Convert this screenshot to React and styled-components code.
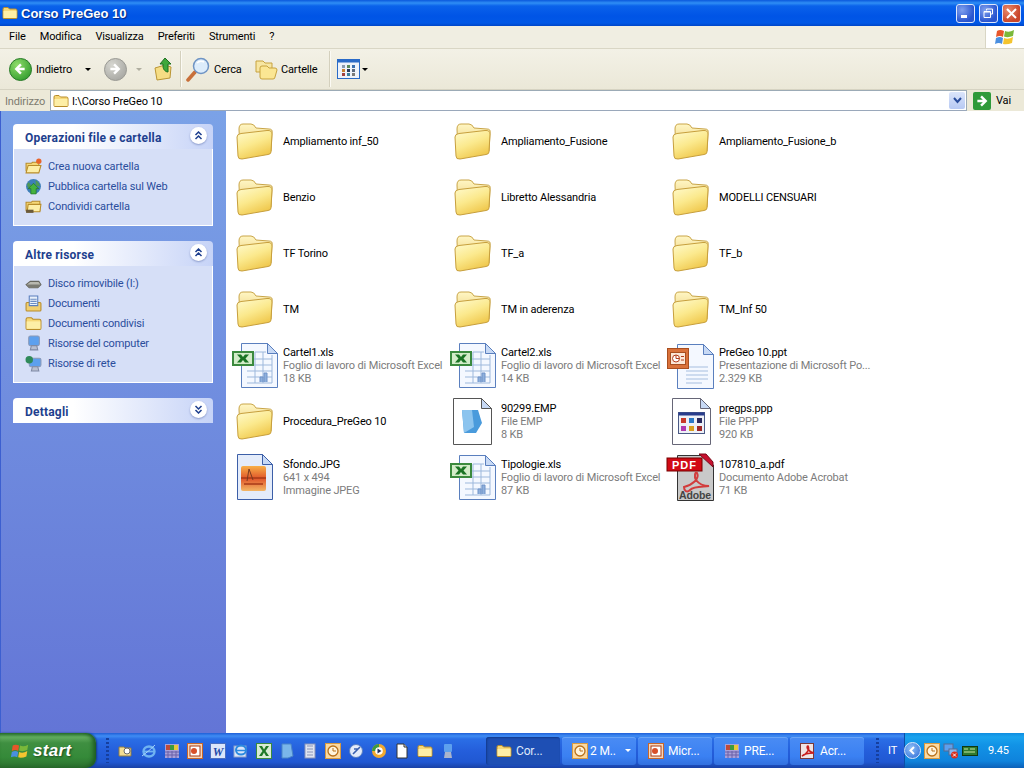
import React from "react";
import styled, { createGlobalStyle } from "styled-components";

const Global = createGlobalStyle`
  html, body { margin: 0; padding: 0; overflow: hidden; background: #fff; }
  * { box-sizing: border-box; }
`;

const font = `Roboto, "Noto Sans", sans-serif`;

const Desktop = styled.div`
  width: 1024px;
  height: 768px;
  display: flex;
  flex-direction: column;
  overflow: hidden;
  font-family: ${font};
  font-size: 11px;
  letter-spacing: -0.15px;
  color: #000;
`;
const TitleBar = styled.div`
  height: 26px;
  flex: none;
  display: flex;
  align-items: center;
  padding: 0 3px 0 2px;
  background: linear-gradient(180deg, #0a58dc 0, #2f8ef5 3px, #0a62ea 6px, #0054e6 16px, #0158e6 23px, #0046c8 26px);
`;
const TitleText = styled.div`
  margin-left: 3px;
  flex: 1;
  color: #fff;
  font-family: "Liberation Sans", sans-serif;
  font-weight: 700;
  font-size: 13px;
  letter-spacing: 0;
  text-shadow: 1px 1px 1px #0a2a80;
`;
const WinButton = styled.div`
  width: 19px;
  height: 19px;
  margin-left: 4px;
  border: 1px solid #dfe8fb;
  border-radius: 3px;
  display: flex;
  align-items: center;
  justify-content: center;
  background: ${(p) => p.$close
    ? "radial-gradient(circle at 30% 30%, #e88a6c, #c9452a 70%)"
    : "radial-gradient(circle at 30% 30%, #7fa0ee, #2a55cf 70%)"};
`;
const MenuBar = styled.div`
  height: 23px;
  flex: none;
  display: flex;
  align-items: stretch;
  background: #f0eee2;
  border-bottom: 1px solid #d9d6c5;
`;
const MenuItems = styled.div`
  flex: 1;
  display: flex;
  align-items: center;
  padding: 0 0 2px 9px;
  gap: 14px;
`;
const LogoBox = styled.div`
  width: 39px;
  background: #fff;
  border-left: 1px solid #d9d6c5;
  display: flex;
  align-items: center;
  justify-content: center;
`;
const ToolBar = styled.div`
  height: 41px;
  flex: none;
  display: flex;
  align-items: center;
  padding-left: 9px;
  background: linear-gradient(180deg, #f3f1e6, #ebe8d8);
  border-bottom: 1px solid #d6d3c2;
`;
const ToolText = styled.span`
  width: ${(p) => p.$width}px;
  margin-left: ${(p) => p.$gap ?? 3}px;
  margin-right: ${(p) => p.$after ?? 0}px;
  white-space: nowrap;
`;
const ToolSep = styled.div`
  width: 1px;
  height: 36px;
  background: #d4d0bd;
  box-shadow: 1px 0 0 #fbfaf4;
  margin: ${(p) => p.$margin};
`;
const Caret = styled.span`
  width: 0;
  height: 0;
  border-left: 3px solid transparent;
  border-right: 3px solid transparent;
  border-top: 3px solid ${(p) => p.$color || "#000"};
  margin-left: ${(p) => p.$left}px;
  margin-right: ${(p) => p.$right || 0}px;
`;
const AddressBar = styled.div`
  height: 21px;
  flex: none;
  display: flex;
  align-items: center;
  background: #ece9d8;
`;
const AddressLabel = styled.div`
  width: 50px;
  padding: 1px 0 0 5px;
  color: #7d7b6f;
`;
const AddressField = styled.div`
  width: 917px;
  height: 21px;
  flex: none;
  display: flex;
  align-items: center;
  padding-left: 2px;
  gap: 3px;
  background: #fff;
  border: 1px solid #9cabb6;
  border-bottom-color: #9aa8bb;
`;
const AddressValue = styled.div`
  flex: 1;
  padding-top: 1px;
`;
const ComboButton = styled.div`
  width: 16px;
  height: 17px;
  margin-right: 1px;
  border-radius: 2px;
  background: linear-gradient(180deg, #dbe5fb, #b7c9f3);
  display: flex;
  align-items: center;
  justify-content: center;
`;
const GoBox = styled.div`
  flex: 1;
  display: flex;
  align-items: center;
  gap: 5px;
  padding-left: 6px;
`;
const Main = styled.div`
  flex: 1;
  min-height: 0;
  display: flex;
  background: #fff;
`;
const SideBar = styled.div`
  width: 226px;
  flex: none;
  padding: 13px 13px 0 12px;
  background: linear-gradient(180deg, #7ba2e7, #6375d6);
  border-left: 1px solid #3c5fd0;
  display: flex;
  flex-direction: column;
  gap: 15px;
`;
const Panel = styled.div`
  width: 200px;
`;
const PanelHead = styled.div`
  height: 25px;
  display: flex;
  align-items: center;
  justify-content: space-between;
  padding: 2px 6px 0 12px;
  border-radius: 4px 4px 0 0;
  background: linear-gradient(90deg, #fff 30%, #c6d3f7);
  color: #1e3f8e;
  font-weight: 700;
  font-size: 12px;
  letter-spacing: 0.2px;
`;
const Chevron = styled.div`
  width: 17px;
  height: 17px;
  border-radius: 50%;
  background: #fff;
  box-shadow: 0 1px 2px #8c9ccb;
  display: flex;
  align-items: center;
  justify-content: center;
  margin-top: -5px;
`;
const PanelBody = styled.div`
  padding: 7px 0 9px 11px;
  background: #d6dff7;
  border: 1px solid #fff;
  border-top: none;
`;
const PanelLink = styled.div`
  height: 20px;
  display: flex;
  align-items: center;
  gap: 6px;
  color: #2a4d9c;
`;
const Files = styled.div`
  flex: 1;
  padding: 2px 0 0 4px;
  display: grid;
  grid-template-columns: repeat(3, 218px);
  grid-auto-rows: 56px;
`;
const Tile = styled.div`
  display: flex;
  align-items: center;
  gap: 5px;
`;
const TileIcon = styled.div`
  width: 48px;
  height: 48px;
  flex: none;
`;
const TileText = styled.div`
  line-height: 13px;
  width: 160px;
  white-space: nowrap;
`;
const TileInfo = styled.div`
  color: #7c7c7c;
`;
const TaskBar = styled.div`
  height: 35px;
  flex: none;
  display: flex;
  align-items: center;
  color: #fff;
  background: linear-gradient(180deg, #1f5fd8 0, #3f8cf3 3px, #2a6ee6 6px, #245edb 18px, #2058d2 29px, #1941a5 35px);
`;
const StartButton = styled.div`
  width: 96px;
  height: 100%;
  flex: none;
  display: flex;
  align-items: center;
  gap: 3px;
  padding-left: 10px;
  border-radius: 0 10px 10px 0;
  background: linear-gradient(180deg, #2f7c34 0, #62ad5f 4px, #3f8f41 10px, #358a39 24px, #2c6f2e 35px);
  box-shadow: inset -3px 0 4px #1e5c22, 1px 0 2px #133d80;
`;
const StartLabel = styled.span`
  font-family: "Liberation Sans", sans-serif;
  font-style: italic;
  font-weight: 700;
  font-size: 17px;
  letter-spacing: 0.3px;
  text-shadow: 1px 1px 2px #1c4a1e;
`;
const Gripper = styled.div`
  width: 3px;
  height: 25px;
  flex: none;
  margin: ${(p) => p.$margin};
  background: repeating-linear-gradient(180deg, #163f9e 0 2px, transparent 2px 4px);
`;
const QuickLaunch = styled.div`
  width: 368px;
  flex: none;
  display: flex;
  align-items: center;
  gap: 7px;
`;
const TaskButtons = styled.div`
  display: flex;
  gap: 2px;
  flex: none;
`;
const TaskButton = styled.div`
  width: 74px;
  height: 28px;
  display: flex;
  align-items: center;
  gap: ${(p) => p.$gap ?? 4}px;
  padding-left: 10px;
  border-radius: 3px;
  font-size: 12px;
  white-space: nowrap;
  color: ${(p) => p.$active ? "#dfe8fb" : "#fff"};
  background: ${(p) => p.$active
    ? "#1e4fb4"
    : "linear-gradient(180deg, #4a8cf4, #3a80f2 70%, #3270de)"};
  box-shadow: ${(p) => p.$active ? "inset 1px 1px 2px #123a8c" : "inset 0 1px 0 #6aa4f7"};
`;
const Lang = styled.div`
  width: 14px;
  flex: none;
  font-size: 11px;
  margin-left: 9px;
`;
const Tray = styled.div`
  flex: 1;
  height: 100%;
  display: flex;
  align-items: center;
  margin-left: 2px;
  gap: 3px;
  background: linear-gradient(180deg, #0f8de0 0, #1aa3ee 4px, #1293e6 12px, #0f83dc 28px, #0c60b8 35px);
  border-left: 1px solid #0c4fa8;
`;
const TrayArrow = styled.div`
  width: 17px;
  height: 17px;
  margin-left: -1px;
  border-radius: 50%;
  background: radial-gradient(circle at 40% 35%, #8fc0f7, #2a69d6);
  border: 1px solid #dbe8fb;
  display: flex;
  align-items: center;
  justify-content: center;
`;
const Clock = styled.div`
  margin-left: 7px;
`;

// folder used for all the big tiles
const FolderBig = () => (
  <svg width="48" height="48" viewBox="0 0 48 48">
    <defs>
      <linearGradient id="fbk" x1="0" y1="0" x2="0" y2="1">
        <stop offset="0" stopColor="#fff6c4" />
        <stop offset="1" stopColor="#e8c767" />
      </linearGradient>
      <linearGradient id="ffr" x1="0" y1="0" x2="0.5" y2="1">
        <stop offset="0" stopColor="#fffbd0" />
        <stop offset="0.55" stopColor="#fbe98d" />
        <stop offset="1" stopColor="#f0c94f" />
      </linearGradient>
    </defs>
    <path d="M9 12 Q9 7 13 7 L21 7 Q24 7 26 11 L39 12 Q43 12 42 16 L41 34 L10 37 Z" fill="url(#fbk)" stroke="#c9a548" />
    <path d="M7 20 Q7 17 11 16.500 L37 13.500 Q42 13 42 17 L41 35 Q41 37 38 37.500 L12 42 Q8 42.500 8 39 Z" fill="url(#ffr)" stroke="#c79f3d" />
  </svg>
);

const DocSheet = ({ x, y, w, h, stroke = "#5a7fbe", fill = "#f4f8ff", fold = 10 }) => (
  <g>
    <path d={`M${x} ${y} H${x + w - fold} L${x + w} ${y + fold} V${y + h} H${x} Z`} fill={fill} stroke={stroke} />
    <path d={`M${x + w - fold} ${y} V${y + fold} H${x + w} Z`} fill="#c7d9f5" stroke={stroke} />
  </g>
);

const ExcelBadge = () => (
  <g>
    <rect x="3" y="11" width="20" height="13" fill="#d3ecc9" stroke="#3b8a3e" strokeWidth="2" />
    <path d="M7 13.500 H11 L13 16 L15 13.500 H19 L15.500 17.500 L19 21.500 H15 L13 19 L11 21.500 H7 L10.500 17.500 Z" fill="#1a7424" />
  </g>
);

const ExcelIcon = () => (
  <svg width="48" height="48" viewBox="0 0 48 48">
    <DocSheet x={11.5} y={2.5} w={36} h={44} />
    <g stroke="#9db8dc" fill="none">
      <path d="M17 18 H42 M17 24 H42 M17 30 H42 M17 36 H42 M17 42 H42 M25 11 V42 M33 11 V42 M42 14 V42 M25 11 H36" />
    </g>
    <path d="M30 41 V36 H33 V41 M34 41 V32 H37 V41" fill="#8fb0dc" stroke="#6e92c8" />
    <ExcelBadge />
  </svg>
);

const PptIcon = () => (
  <svg width="48" height="48" viewBox="0 0 48 48">
    <DocSheet x={11.5} y={3.5} w={36} h={44} />
    <path d="M20 26 H42 M20 30 H42 M20 34 H42 M20 38 H42 M20 42 H36" stroke="#a6bedf" />
    <rect x="1.500" y="7.500" width="21" height="20" fill="#d9713a" stroke="#a84e1f" />
    <rect x="4.500" y="11.500" width="15" height="12" fill="#fbe6d6" stroke="#a84e1f" />
    <circle cx="10" cy="17.500" r="3.500" fill="#fff" stroke="#b33c1a" />
    <path d="M10 14 V17.500 H13.500" stroke="#b33c1a" fill="none" />
    <path d="M15 15.500 H18 M15 19 H18" stroke="#b33c1a" />
  </svg>
);

const EmpIcon = () => (
  <svg width="48" height="48" viewBox="0 0 48 48">
    <DocSheet x={5.5} y={1.5} w={38} h={46} stroke="#555" fill="#fff" />
    <path d="M14 13 H30 L34 26 L28 36 H16 Z" fill="#4a9bdc" />
    <path d="M14 13 H24 L26 30 L16 36 Z" fill="#8cc4ee" />
  </svg>
);

const PppIcon = () => (
  <svg width="48" height="48" viewBox="0 0 48 48">
    <DocSheet x={6.5} y={1.5} w={38} h={46} stroke="#667" fill="#fff" />
    <rect x="12.500" y="15.500" width="26" height="21" fill="#eef1f7" stroke="#4b5a86" />
    <rect x="12.500" y="15.500" width="26" height="3" fill="#283c8c" />
    {[
      [15, 21, "#c83a2a"], [23, 21, "#2a7ac8"], [31, 21, "#2a2a60"],
      [15, 29, "#b03ab0"], [23, 29, "#d8a020"], [31, 29, "#a02828"],
    ].map(([x, y, c]) => (
      <rect key={`${x}-${y}`} x={x} y={y} width="5" height="5" fill={c} />
    ))}
  </svg>
);

const JpgIcon = () => (
  <svg width="48" height="48" viewBox="0 0 48 48">
    <defs>
      <linearGradient id="sun" x1="0" y1="0" x2="0" y2="1">
        <stop offset="0" stopColor="#f8b048" />
        <stop offset="0.5" stopColor="#e0552a" />
        <stop offset="1" stopColor="#f3b765" />
      </linearGradient>
    </defs>
    <DocSheet x={7.5} y={1.5} w={35} h={45} stroke="#3c5fa8" fill="#e4ecfa" />
    <rect x="11" y="13" width="25" height="25" rx="2" fill="url(#sun)" />
    <path d="M11 25 H36 M14 31 H33" stroke="#a83a18" strokeWidth="1.500" />
    <path d="M17 28 L19 16 M19 16 L23 27" stroke="#7a3a20" fill="none" />
  </svg>
);

const PdfIcon = () => (
  <svg width="48" height="48" viewBox="0 0 48 48">
    <path d="M11.500 2.500 H37 L47.500 12 V47.500 H11.500 Z" fill="#c9c9c9" stroke="#333" />
    <path d="M33 1 L40 1 L47 9 L47 14 Z" fill="#c8102e" stroke="#7a0a1a" />
    <rect x="1" y="5" width="35" height="13" fill="#d20a14" stroke="#700" />
    <text x="18.500" y="15.500" fontFamily="Liberation Sans, sans-serif" fontSize="11" fontWeight="700" fill="#fff" textAnchor="middle" letterSpacing="1">PDF</text>
    <path d="M18 34 C26 32 34 26 31 20 C29 18 28 24 30 27 C33 31 38 33 43 33 C38 34 28 33 24 37 C21 40 18 38 18 34 Z" fill="none" stroke="#d23c3c" strokeWidth="2" />
    <text x="29" y="46" fontFamily="Liberation Sans, sans-serif" fontSize="10.500" fontWeight="700" fill="#444" textAnchor="middle">Adobe</text>
  </svg>
);

const FolderSmall = ({ open }) => (
  <svg width="16" height="16" viewBox="0 0 16 16">
    <path d="M1 4 Q1 2.500 2.500 2.500 H6 L7.500 4 H13.500 Q15 4 15 5.500 V12.500 Q15 13.500 14 13.500 H2 Q1 13.500 1 12.500 Z" fill="#f6d878" stroke="#b88c2a" />
    <path d={open ? "M3 7 H15.500 L13.500 13.500 H1.500 Z" : "M1.500 6 H14.500 V13 H1.500 Z"} fill="#fdeea6" stroke={open ? "#b88c2a" : "none"} />
  </svg>
);

const Arrow = ({ dir = "left", color = "#fff", size = 13 }) => (
  <svg width={size} height={size} viewBox="0 0 14 14">
    <path
      d={dir === "left" ? "M8 2 L3 7 L8 12 M3 7 H12" : "M6 2 L11 7 L6 12 M11 7 H2"}
      fill="none"
      stroke={color}
      strokeWidth="2.600"
    />
  </svg>
);

const RoundNav = ({ dir, c1, c2, border }) => (
  <svg width="23" height="23" viewBox="0 0 23 23">
    <defs>
      <radialGradient id={`nav${dir}`} cx="0.35" cy="0.3" r="0.8">
        <stop offset="0" stopColor={c1} />
        <stop offset="1" stopColor={c2} />
      </radialGradient>
    </defs>
    <circle cx="11.500" cy="11.500" r="11" fill={`url(#nav${dir})`} stroke={border} />
    <g transform="translate(4.500 4.500)"><Arrow dir={dir} /></g>
  </svg>
);

const UpFolder = () => (
  <svg width="19" height="24" viewBox="0 0 19 24">
    <path d="M1 11 L11 8 L17 10 L16 21 L3 23 Z" fill="#f6dd84" stroke="#ba9534" />
    <path d="M11 1 L17 7 H14 V15 C12 15 9 13 9 9 V7 H6 Z" fill="#3fa83c" stroke="#1f7020" />
  </svg>
);

const Magnifier = () => (
  <svg width="25" height="25" viewBox="0 0 25 25">
    <path d="M2 23 L9 15" stroke="#c8703a" strokeWidth="3.500" strokeLinecap="round" />
    <circle cx="15" cy="9" r="7.500" fill="#dcecfb" stroke="#6f94c4" strokeWidth="1.500" />
    <path d="M11 6 Q14 3 18 5" stroke="#fff" strokeWidth="1.500" fill="none" />
  </svg>
);

const TwoFolders = () => (
  <svg width="23" height="21" viewBox="0 0 23 21">
    <path d="M1 2 H8 L10 4 H17 V13 H1 Z" fill="#f7e6a2" stroke="#c7a23e" />
    <path d="M5 9 Q5 7 7 7 H12 L14 9 H20 Q22 9 22 11 L20 18 Q20 20 18 20 H7 Q5 20 5 18 Z" fill="#fbe693" stroke="#c7a23e" />
  </svg>
);

const ViewsIcon = () => (
  <svg width="23" height="20" viewBox="0 0 23 20">
    <rect x="0.500" y="0.500" width="22" height="19" fill="#eef3fb" stroke="#2a6bc8" />
    <rect x="0.500" y="0.500" width="22" height="3" fill="#2a6bc8" />
    {[
      [5, 6, "#8a9bb0"], [10, 6, "#5a8a5a"], [15, 6, "#3a6fb0"],
      [5, 10, "#c88030"], [10, 10, "#2a3a5a"], [15, 10, "#5a6a80"],
      [5, 14, "#a04040"], [10, 14, "#3a80a0"], [15, 14, "#7a7a7a"],
    ].map(([x, y, c]) => <rect key={`${x}-${y}`} x={x} y={y} width="3" height="3" fill={c} />)}
  </svg>
);

const WinLogo = ({ size = 22 }) => (
  <svg width={size} height={size} viewBox="0 0 22 22">
    <path d="M3 5 Q6 3 10 5 L9 11 Q6 9 2 11 Z" fill="#e8562a" />
    <path d="M11 5 Q15 7 20 4 L19 10 Q14 12 10 10.500 Z" fill="#7ab83a" />
    <path d="M2 12 Q6 10 9 12 L8 18 Q5 16 1 18 Z" fill="#4a8fe0" />
    <path d="M10 12 Q14 14 19 11 L18 17 Q13 19 9 18 Z" fill="#f4c430" />
  </svg>
);

const DoubleChevron = ({ down }) => (
  <svg width="9" height="9" viewBox="0 0 9 9">
    <path
      d={down ? "M1.500 1 L4.500 4 L7.500 1 M1.500 5 L4.500 8 L7.500 5" : "M1.500 4 L4.500 1 L7.500 4 M1.500 8 L4.500 5 L7.500 8"}
      fill="none"
      stroke="#1e3f8e"
      strokeWidth="1.500"
    />
  </svg>
);

const Small = ({ kind }) => {
  const wrap = (children) => <svg width="17" height="17" viewBox="0 0 16 16">{children}</svg>;
  switch (kind) {
    case "newFolder":
      return wrap(<><path d="M1 5 H6 L7 4 H13 V12 H1 Z" fill="#f6d878" stroke="#b88c2a" /><path d="M3 7 H15 L13 14 H1 Z" fill="#fdeea6" stroke="#b88c2a" /><circle cx="13" cy="3" r="2.500" fill="#e8642a" /></>);
    case "web":
      return wrap(<><circle cx="8" cy="8" r="7" fill="#3d7fb8" /><path d="M3 4 Q7 6 5 10 Q2 9 2 6 Z M10 2 Q14 4 14 8 L10 7 Z" fill="#4f9a55" /><path d="M8 5 L13 10 H10.500 V15 H5.500 V10 H3 Z" fill="#45b23f" stroke="#1f7020" strokeWidth="0.600" /></>);
    case "share":
      return wrap(<><path d="M1 4 H6 L7 3 H14 V12 H1 Z" fill="#f6d878" stroke="#b88c2a" /><path d="M3 6 H15 L14 13 H2 Z" fill="#fdeea6" stroke="#b88c2a" /><rect x="1" y="11" width="7" height="3" fill="#6b5a3a" /></>);
    case "disk":
      return wrap(<><path d="M1 9 L5 6 H13 L15 9 L12 12 H4 Z" fill="#b8b8b0" stroke="#66665e" /><path d="M1 9 L4 12 H12 L15 9 Z" fill="#7a7a72" /></>);
    case "docs":
      return wrap(<><rect x="1" y="7" width="14" height="8" rx="1" fill="#f1cf70" stroke="#b88c2a" /><path d="M4 1 H12 V10 H4 Z" fill="#e9f1fb" stroke="#5a7fbe" /><path d="M5 4 H11 M5 6 H11 M5 8 H11" stroke="#6b8cc4" /></>);
    case "shared":
      return wrap(<><path d="M1 4 Q1 2.500 2.500 2.500 H6 L7.500 4 H13.500 Q15 4 15 5.500 V12.500 Q15 13.500 14 13.500 H2 Q1 13.500 1 12.500 Z" fill="#f6d878" stroke="#b88c2a" /><path d="M1.500 6 H14.500 V13 H1.500 Z" fill="#fdeea6" /></>);
    case "pc":
      return wrap(<><rect x="3.500" y="1" width="10" height="9" rx="1.500" fill="#5da0ee" stroke="#8a99b8" /><path d="M6 10 H11 L12 14 H5 Z" fill="#b8bfd0" stroke="#7f8aa5" /></>);
    case "net":
      return wrap(<><rect x="4" y="3" width="11" height="8" rx="1.500" fill="#5da0ee" stroke="#8a99b8" /><circle cx="4" cy="4.500" r="3.500" fill="#2f8a5a" /><path d="M7 11 H12 L13 15 H6 Z" fill="#b8bfd0" stroke="#7f8aa5" /></>);
    default:
      return null;
  }
};

const ql = {
  explorer: <><path d="M1 4 H6 L7 5 H13 V13 H1 Z" fill="#f3dc92" stroke="#8c7a48" /><circle cx="9" cy="8" r="3" fill="#fff" stroke="#6a6a6a" /></>,
  ie: <><ellipse cx="8" cy="8.500" rx="5.500" ry="5" fill="none" stroke="#6fb3f2" strokeWidth="2.400" /><path d="M3 8.500 H13" stroke="#6fb3f2" strokeWidth="1.800" /><path d="M1 13 Q8 8 14 2" stroke="#a8d4fa" fill="none" /></>,
  grid: <><rect x="1" y="1" width="14" height="14" fill="#a9a0d8" /><rect x="2" y="2" width="4" height="5" fill="#c04a3a" /><rect x="6" y="2" width="4" height="5" fill="#3f9a3f" /><rect x="10" y="2" width="4" height="5" fill="#e8c83a" /><path d="M1 9 H15 M1 12 H15 M4 8 V15 M8 8 V15 M12 8 V15" stroke="#6a60a8" /></>,
  ppt: <><rect x="0.500" y="0.500" width="15" height="15" fill="#f6d6b8" stroke="#c8662a" /><rect x="3" y="3" width="10" height="10" fill="#fff" stroke="#a83a18" /><circle cx="7" cy="8" r="3" fill="#d8502a" /></>,
  word: <><rect x="0.500" y="0.500" width="15" height="15" fill="#dbe6fa" stroke="#4a6fc0" /><text x="8" y="12.500" fontFamily="Liberation Serif, serif" fontStyle="italic" fontWeight="700" fontSize="12" fill="#1f4aa8" textAnchor="middle">W</text></>,
  ie2: <><rect x="1" y="3" width="12" height="11" fill="#dbe6fa" stroke="#8aa0c8" /><ellipse cx="8" cy="7" rx="5" ry="4.500" fill="none" stroke="#2a8ae0" strokeWidth="2" /><path d="M3 7.500 H13" stroke="#2a8ae0" strokeWidth="1.500" /></>,
  excel: <><rect x="0.500" y="0.500" width="15" height="15" fill="#d9ecd4" stroke="#3b8a3e" /><path d="M3 3 H6 L8 6.500 L10 3 H13 L9.500 8 L13 13 H10 L8 9.500 L6 13 H3 L6.500 8 Z" fill="#1f7a28" /></>,
  note: <path d="M3 1 H12 L14 13 L9 15 H3 Z" fill="#7ab6ea" stroke="#4a86c8" />,
  calc: <><rect x="3" y="1" width="10" height="14" fill="#dfe4f0" stroke="#8a94b8" /><path d="M5 3 H11 M5 6 H11 M5 9 H11 M5 12 H11" stroke="#8a94b8" strokeWidth="1.200" /></>,
  clock: <><rect x="0.500" y="0.500" width="15" height="15" fill="#fbd9a0" stroke="#d89a40" /><circle cx="8" cy="8" r="5" fill="#fff4dc" stroke="#b8701a" strokeWidth="1.300" /><path d="M8 5 V8 H11" stroke="#b8701a" fill="none" /></>,
  outlook: <><circle cx="8" cy="8" r="6.500" fill="#e4ecfa" stroke="#5a80c0" /><path d="M5 11 L12 4 M6 6 H10" stroke="#3a60b0" strokeWidth="1.600" /></>,
  media: <><circle cx="8" cy="8" r="7" fill="#f0a830" /><path d="M1 8 A7 7 0 0 1 8 1 V8 Z" fill="#3f9a3f" /><circle cx="8" cy="8" r="3.800" fill="#fff" /><path d="M6.500 5.500 L10.500 8 L6.500 10.500 Z" fill="#203060" /></>,
  page: <><path d="M3 1 H10 L13 4 V15 H3 Z" fill="#fff" stroke="#333" /><path d="M10 1 V4 H13" fill="#ddd" stroke="#333" /></>,
  tower: <><rect x="4" y="1" width="8" height="8" rx="1" fill="#5da0ee" /><path d="M5 9 H11 L12 15 H4 Z" fill="#aab4cc" /></>,
  acrobat: <><rect x="0.500" y="0.500" width="13" height="15" fill="#f0e4e4" stroke="#7a3a3a" /><path d="M2 13 C7 11 10 6 8 3 C6 3 7 8 14 10 C10 10 5 10 2 13 Z" fill="none" stroke="#c81e1e" strokeWidth="1.500" /></>,
  trayNet: <><rect x="1" y="1" width="9" height="7" fill="#5da0ee" stroke="#5a6a90" /><rect x="6" y="6" width="8" height="6" fill="#8ab8ee" stroke="#5a6a90" /><circle cx="11.500" cy="12" r="3.500" fill="#d8301e" /><path d="M10 10.500 L13 13.500 M13 10.500 L10 13.500" stroke="#fff" /></>,
  trayCard: <><rect x="0.500" y="3.500" width="15" height="9" fill="#2f7a2f" stroke="#103810" /><path d="M2 6 H6 M8 6 H13 M2 9 H13" stroke="#c8e8a0" /></>,
};

const QL = ({ k }) => (k === "folder" ? <FolderSmall /> : <svg width="16" height="16" viewBox="0 0 16 16">{ql[k]}</svg>);

const files = [
  { name: "Ampliamento inf_50" }, { name: "Ampliamento_Fusione" }, { name: "Ampliamento_Fusione_b" },
  { name: "Benzio" }, { name: "Libretto Alessandria" }, { name: "MODELLI CENSUARI" },
  { name: "TF Torino" }, { name: "TF_a" }, { name: "TF_b" },
  { name: "TM" }, { name: "TM in aderenza" }, { name: "TM_Inf 50" },
  { name: "Cartel1.xls", info: ["Foglio di lavoro di Microsoft Excel", "18 KB"], icon: ExcelIcon },
  { name: "Cartel2.xls", info: ["Foglio di lavoro di Microsoft Excel", "14 KB"], icon: ExcelIcon },
  { name: "PreGeo 10.ppt", info: ["Presentazione di Microsoft Po...", "2.329 KB"], icon: PptIcon },
  { name: "Procedura_PreGeo 10" },
  { name: "90299.EMP", info: ["File EMP", "8 KB"], icon: EmpIcon },
  { name: "pregps.ppp", info: ["File PPP", "920 KB"], icon: PppIcon },
  { name: "Sfondo.JPG", info: ["641 x 494", "Immagine JPEG"], icon: JpgIcon },
  { name: "Tipologie.xls", info: ["Foglio di lavoro di Microsoft Excel", "87 KB"], icon: ExcelIcon },
  { name: "107810_a.pdf", info: ["Documento Adobe Acrobat", "71 KB"], icon: PdfIcon },
];

const panels = [
  { title: "Operazioni file e cartella", links: [["newFolder", "Crea nuova cartella"], ["web", "Pubblica cartella sul Web"], ["share", "Condividi cartella"]] },
  { title: "Altre risorse", links: [["disk", "Disco rimovibile (I:)"], ["docs", "Documenti"], ["shared", "Documenti condivisi"], ["pc", "Risorse del computer"], ["net", "Risorse di rete"]] },
  { title: "Dettagli", collapsed: true, links: [] },
];

const quick = ["explorer", "ie", "grid", "ppt", "word", "ie2", "excel", "note", "calc", "clock", "outlook", "media", "page", "folder", "tower"];

const tasks = [
  { k: "folder", label: "Cor...", active: true },
  { k: "clock", label: "2 M..", caret: true, gap: 2 },
  { k: "ppt", label: "Micr..." },
  { k: "grid", label: "PRE..." },
  { k: "acrobat", label: "Acr..." },
];

export default function App() {
  return (
    <Desktop>
      <Global />
      <TitleBar>
        <FolderSmall />
        <TitleText>Corso PreGeo 10</TitleText>
        <WinButton>
          <svg width="11" height="11" viewBox="0 0 11 11"><rect x="1" y="7" width="6" height="3" fill="#fff" /></svg>
        </WinButton>
        <WinButton>
          <svg width="11" height="11" viewBox="0 0 11 11"><path d="M3.500 2.500 V1 H9.500 V6 H8 M1 3.500 H7.500 V9.500 H1 Z M1 4 H7.500" fill="none" stroke="#fff" /></svg>
        </WinButton>
        <WinButton $close>
          <svg width="11" height="11" viewBox="0 0 11 11"><path d="M1 1 L10 10 M10 1 L1 10" stroke="#fff" strokeWidth="2" /></svg>
        </WinButton>
      </TitleBar>
      <MenuBar>
        <MenuItems>
          {["File", "Modifica", "Visualizza", "Preferiti", "Strumenti", "?"].map((m) => <span key={m}>{m}</span>)}
        </MenuItems>
        <LogoBox><WinLogo /></LogoBox>
      </MenuBar>
      <ToolBar>
        <RoundNav dir="left" c1="#8fdc6a" c2="#2f9a2c" border="#2a7a2a" />
        <ToolText $gap={4} $width={40}>Indietro</ToolText>
        <Caret $left={9} $right={13} />
        <RoundNav dir="right" c1="#d6d6d0" c2="#a5a5a0" border="#9a9a94" />
        <Caret $left={9} $right={12} $color="#b0aea0" />
        <UpFolder />
        <ToolSep $margin="0 5px 0 7px" />
        <Magnifier />
        <ToolText $width={30} $after={11}>Cerca</ToolText>
        <TwoFolders />
        <ToolText $gap={3} $width={38}>Cartelle</ToolText>
        <ToolSep $margin="0 7px 0 10px" />
        <ViewsIcon />
        <Caret $left={2} />
      </ToolBar>
      <AddressBar>
        <AddressLabel>Indirizzo</AddressLabel>
        <AddressField>
          <FolderSmall />
          <AddressValue>I:\Corso PreGeo 10</AddressValue>
          <ComboButton>
            <svg width="9" height="7" viewBox="0 0 9 7"><path d="M1 1 L4.500 5 L8 1" fill="none" stroke="#2a4d9c" strokeWidth="2" /></svg>
          </ComboButton>
        </AddressField>
        <GoBox>
          <svg width="18" height="18" viewBox="0 0 18 18">
            <rect width="18" height="18" rx="2" fill="#2f9a3a" />
            <g transform="translate(2.500 2.500)"><Arrow dir="right" /></g>
          </svg>
          <span>Vai</span>
        </GoBox>
      </AddressBar>
      <Main>
        <SideBar>
          {panels.map((panel) => (
            <Panel key={panel.title}>
              <PanelHead>
                {panel.title}
                <Chevron><DoubleChevron down={panel.collapsed} /></Chevron>
              </PanelHead>
              {!panel.collapsed && (
                <PanelBody>
                  {panel.links.map(([kind, label]) => (
                    <PanelLink key={label}><Small kind={kind} />{label}</PanelLink>
                  ))}
                </PanelBody>
              )}
            </Panel>
          ))}
        </SideBar>
        <Files>
          {files.map((f) => {
            const Icon = f.icon || FolderBig;
            return (
              <Tile key={f.name}>
                <TileIcon><Icon /></TileIcon>
                <TileText>
                  <div>{f.name}</div>
                  {f.info && f.info.map((line) => <TileInfo key={line}>{line}</TileInfo>)}
                </TileText>
              </Tile>
            );
          })}
        </Files>
      </Main>
      <TaskBar>
        <StartButton>
          <WinLogo size={20} />
          <StartLabel>start</StartLabel>
        </StartButton>
        <Gripper $margin="0 9px 0 10px" />
        <QuickLaunch>
          {quick.map((k) => <QL key={k} k={k} />)}
        </QuickLaunch>
        <TaskButtons>
          {tasks.map((t) => (
            <TaskButton key={t.label} $active={t.active} $gap={t.gap}>
              <QL k={t.k} />
              {t.label}
              {t.caret && <Caret $left={7} $color="#fff" />}
            </TaskButton>
          ))}
        </TaskButtons>
        <Gripper $margin="0 0 0 12px" />
        <Lang>IT</Lang>
        <Tray>
          <TrayArrow>
            <svg width="9" height="9" viewBox="0 0 9 9"><path d="M6 1 L2.500 4.500 L6 8" fill="none" stroke="#fff" strokeWidth="2" /></svg>
          </TrayArrow>
          <QL k="clock" />
          <QL k="trayNet" />
          <QL k="trayCard" />
          <Clock>9.45</Clock>
        </Tray>
      </TaskBar>
    </Desktop>
  );
}
